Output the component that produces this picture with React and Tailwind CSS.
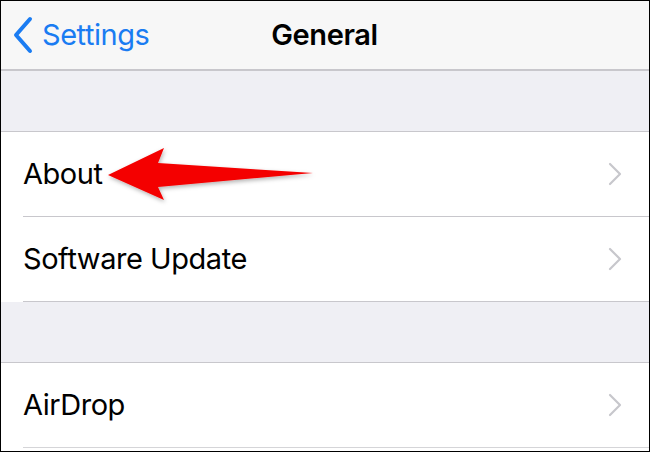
import React from 'react';

const Chevron = () => (
  <svg className="w-[16px] h-[26px]" viewBox="0 0 16 26" fill="none">
    <path d="M3 3l10 10-10 10" stroke="#c7c7cc" strokeWidth="2.2" strokeLinecap="round" strokeLinejoin="round" />
  </svg>
);

const Row = ({ label, last }) => (
  <div className="h-[85px] bg-white flex flex-col">
    <div className="flex-1 flex items-center justify-between pl-[22px] pr-[26px]">
      <span className="text-[29px] text-black tracking-[-0.45px]">{label}</span>
      <Chevron />
    </div>
    <div className={`h-px ml-[22px] ${last ? 'bg-[#d5d5d8]' : 'bg-[#c8c7cc]'}`} />
  </div>
);

const Gap = () => (
  <div className="h-[61px] bg-[#efeff4] border-b border-[#c8c7cc]" />
);

export default function App() {
  return (
    <div
      className="relative w-[650px] h-[452px] overflow-hidden bg-white border border-black"
      style={{ fontFamily: 'Inter, "Noto Sans", sans-serif' }}
    >
      {/* Nav bar */}
      <div className="h-[70px] bg-[#f7f7f7] border-b-2 border-[#c8c7cc] flex items-center relative">
        <div className="flex items-center pl-[11px] text-[#1a7cf2]">
          <svg className="w-[22px] h-[38px]" viewBox="0 0 22 38" fill="none">
            <path d="M18 3L4 19l14 16" stroke="#1a7cf2" strokeWidth="4" strokeLinecap="round" strokeLinejoin="round" />
          </svg>
          <span className="ml-[8px] text-[29px] tracking-[-0.45px]">Settings</span>
        </div>
        <div className="absolute left-0 right-0 top-0 bottom-0 flex items-center justify-center pointer-events-none">
          <span className="text-[29px] font-semibold text-black tracking-[-0.4px] -ml-[1px]">General</span>
        </div>
      </div>

      <Gap />
      <Row label="About" />
      <Row label="Software Update" />
      <Gap />
      <Row label="AirDrop" last />

      {/* Red arrow */}
      <svg className="absolute left-0 top-0 w-[650px] h-[452px] pointer-events-none" viewBox="0 0 650 452">
        <defs>
          <filter id="sh" x="-20%" y="-50%" width="140%" height="200%">
            <feDropShadow dx="1" dy="2" stdDeviation="2" floodColor="#000" floodOpacity="0.3" />
          </filter>
        </defs>
        <polygon
          points="107,174 163,147 157,162 312,172 157,186 163,199"
          fill="#f40000"
          filter="url(#sh)"
        />
      </svg>
    </div>
  );
}
